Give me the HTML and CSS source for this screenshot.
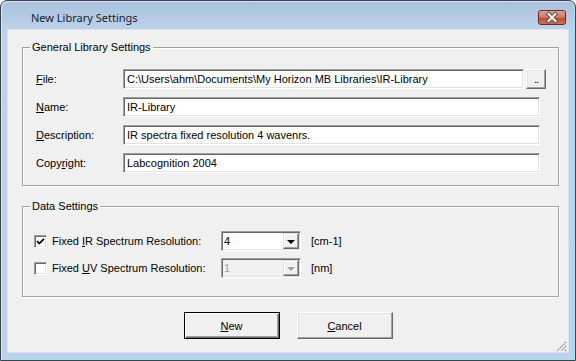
FILE: index.html
```html
<!DOCTYPE html>
<html>
<head>
    <meta charset="utf-8">
    <title>New Library Settings</title>
    <link rel="stylesheet" href="styles.css">
</head>
<body>
    <div class="window">
        <div class="titlebar">
            <span class="title">New Library Settings</span>
            <svg class="close" width="28" height="15" viewBox="0 0 28 15">
                <defs>
                    <linearGradient id="closeGrad" x1="0" y1="0" x2="0" y2="1">
                        <stop offset="0" stop-color="#e2a698"/>
                        <stop offset="0.5" stop-color="#cf7462"/>
                        <stop offset="0.55" stop-color="#bf4a34"/>
                        <stop offset="1" stop-color="#d2705a"/>
                    </linearGradient>
                </defs>
                <rect x="0.5" y="0.5" width="27" height="14" rx="2.5" fill="url(#closeGrad)" stroke="#6e2a20"/>
                <path d="M10.5 4 L17.5 11 M17.5 4 L10.5 11" stroke="#5a4a4a" stroke-width="4" stroke-linecap="square"/>
                <path d="M10.5 4 L17.5 11 M17.5 4 L10.5 11" stroke="#ffffff" stroke-width="2" stroke-linecap="square"/>
            </svg>
        </div>
        <div class="client">
            <fieldset class="group general">
                <legend>General Library Settings</legend>
                <div class="row">
                    <label class="caption"><u>F</u>ile:</label>
                    <input class="field file" type="text" value="C:\Users\ahm\Documents\My Horizon MB Libraries\IR-Library">
                    <button class="browse">..</button>
                </div>
                <div class="row">
                    <label class="caption"><u>N</u>ame:</label>
                    <input class="field" type="text" value="IR-Library">
                </div>
                <div class="row">
                    <label class="caption"><u>D</u>escription:</label>
                    <input class="field" type="text" value="IR spectra fixed resolution 4 wavenrs.">
                </div>
                <div class="row">
                    <label class="caption">Copy<u>r</u>ight:</label>
                    <input class="field" type="text" value="Labcognition 2004">
                </div>
            </fieldset>

            <fieldset class="group data">
                <legend>Data Settings</legend>
                <div class="check-row">
                    <label class="check-label">
                        <span class="checkbox">
                            <svg width="9" height="9" viewBox="0 0 9 9"><path d="M1 4 L3.3 6.5 L8 1.8" fill="none" stroke="#000" stroke-width="1.8"/></svg>
                        </span>
                        <span>Fixed <u>I</u>R Spectrum Resolution:</span>
                    </label>
                    <div class="combo">
                        <span class="combo-value">4</span>
                        <span class="drop"><span class="arrow"></span></span>
                    </div>
                    <span class="unit">[cm-1]</span>
                </div>
                <div class="check-row">
                    <label class="check-label">
                        <span class="checkbox"></span>
                        <span>Fixed <u>U</u>V Spectrum Resolution:</span>
                    </label>
                    <div class="combo disabled">
                        <span class="combo-value">1</span>
                        <span class="drop"><span class="arrow"></span></span>
                    </div>
                    <span class="unit">[nm]</span>
                </div>
            </fieldset>

            <div class="buttons">
                <button class="push default"><u>N</u>ew</button>
                <button class="push"><u>C</u>ancel</button>
            </div>

            <svg class="grip" width="13" height="13" viewBox="0 0 13 13">
                <path d="M12 3 L3 12 M12 7 L7 12 M12 11 L11 12" stroke="#8a8a8a" stroke-width="1.4" stroke-dasharray="1.4 1"/>
                <path d="M13 4 L4 13 M13 8 L8 13" stroke="#ffffff" stroke-width="1" stroke-dasharray="1.4 1"/>
            </svg>
        </div>
    </div>
</body>
</html>
```

FILE: styles.css
```css
body {
    margin: 0;
    width: 576px;
    height: 361px;
    overflow: hidden;
    background-color: #fff;
    font-family: "Liberation Sans", Arial, sans-serif;
    font-size: 11px;
    color: #000;
}
.window {
    box-sizing: border-box;
    width: 576px;
    height: 361px;
    border: 1px solid #3a4350;
    border-radius: 7px 7px 0 0;
    background: linear-gradient(#a9c1dd, #bdd3ec 30px, #bcd2ea);
    box-shadow: inset 1px 1px 0 #d6e4f3, inset -1px -1px 0 #9fe3f2;
    display: flex;
    flex-direction: column;
}
.titlebar {
    height: 29px;
    display: flex;
    align-items: flex-start;
}
.title {
    margin: 9px 0 0 30px;
    font-family: "Noto Sans", "Open Sans", sans-serif;
    font-size: 11px;
    line-height: 16px;
    color: #1b1b2a;
}
.close {
    margin: 9px 9px 0 auto;
}
.client {
    position: relative;
    height: 322px;
    margin: 0 7px;
    background-color: #f0f0f0;
    box-shadow: 0 0 0 1px #d7e3f0;
    display: flex;
    flex-direction: column;
}

/* group boxes */
.group {
    box-sizing: border-box;
    margin: 0 9px 0 14px;
    padding: 0;
    border: 1px solid #a0a0a0;
    box-shadow: inset 1px 1px 0 #fff, 1px 1px 0 #fff;
}
.group legend {
    margin-left: 7px;
    padding: 0 2px;
    line-height: 13px;
    background-color: #f0f0f0;
    color: #000;
}
.general {
    margin-top: 11px;
    height: 145px;
    padding-top: 15px;
}
.data {
    margin-top: 14px;
    height: 97px;
    padding-top: 18px;
}

/* text rows */
.row {
    display: flex;
    align-items: center;
    height: 20px;
    margin: 0 0 8px 13px;
}
.caption {
    width: 87px;
}
.field {
    box-sizing: border-box;
    width: 417px;
    height: 20px;
    margin: 0;
    padding: 0 3px;
    font-family: "Liberation Sans", Arial, sans-serif;
    font-size: 11px;
    color: #000;
    background-color: #fff;
    border: 1px solid;
    border-color: #a0a0a0 #fff #fff #a0a0a0;
    box-shadow: inset 1px 1px 0 #696969, inset -1px -1px 0 #e3e3e3;
    outline: none;
}
.field.file {
    width: 401px;
}
.browse {
    box-sizing: border-box;
    width: 20px;
    height: 20px;
    margin-left: 2px;
    padding: 0 0 3px;
    font-family: "Liberation Sans", Arial, sans-serif;
    font-size: 11px;
    letter-spacing: -1px;
    line-height: 1;
    background-color: #f0f0f0;
    border: 1px solid;
    border-color: #fff #696969 #696969 #fff;
    box-shadow: inset -1px -1px 0 #a0a0a0, inset 1px 1px 0 #e3e3e3;
    display: flex;
    align-items: flex-end;
    justify-content: center;
}

/* check rows */
.check-row {
    display: flex;
    align-items: center;
    height: 20px;
    margin: 0 0 7px 11px;
}
.check-label {
    width: 187px;
    display: flex;
    align-items: center;
    gap: 5px;
}
.checkbox {
    box-sizing: border-box;
    width: 13px;
    height: 13px;
    background-color: #fff;
    border: 1px solid;
    border-color: #a0a0a0 #fff #fff #a0a0a0;
    box-shadow: inset 1px 1px 0 #696969, inset -1px -1px 0 #e3e3e3;
    display: flex;
    align-items: center;
    justify-content: center;
}
.combo {
    box-sizing: border-box;
    width: 80px;
    height: 20px;
    padding: 1px;
    background-color: #fff;
    border: 1px solid;
    border-color: #a0a0a0 #fff #fff #a0a0a0;
    box-shadow: inset 1px 1px 0 #696969, inset -1px -1px 0 #e3e3e3;
    display: flex;
    align-items: center;
}
.combo-value {
    flex: 1;
    padding-left: 1px;
}
.drop {
    box-sizing: border-box;
    width: 16px;
    height: 16px;
    background-color: #f0f0f0;
    border: 1px solid;
    border-color: #e3e3e3 #696969 #696969 #e3e3e3;
    box-shadow: inset -1px -1px 0 #a0a0a0, inset 1px 1px 0 #fff;
    display: flex;
    align-items: center;
    justify-content: center;
}
.arrow {
    width: 0;
    height: 0;
    margin-top: 1px;
    border-left: 4px solid transparent;
    border-right: 4px solid transparent;
    border-top: 4px solid #000;
}
.combo.disabled {
    background-color: #f0f0f0;
    color: #a0a0a0;
}
.combo.disabled .arrow {
    border-top-color: #a0a0a0;
}
.unit {
    margin-left: 10px;
}

/* bottom buttons */
.buttons {
    display: flex;
    justify-content: center;
    gap: 17px;
    margin-top: 15px;
}
.push {
    box-sizing: border-box;
    width: 96px;
    height: 27px;
    padding: 0;
    font-family: "Liberation Sans", Arial, sans-serif;
    font-size: 11px;
    color: #000;
    background-color: #f0f0f0;
    border: 1px solid;
    border-color: #fff #696969 #696969 #fff;
    box-shadow: inset -1px -1px 0 #a0a0a0, inset 1px 1px 0 #e3e3e3;
}
.push.default {
    border-color: #000;
    box-shadow: inset 1px 1px 0 #fff, inset -1px -1px 0 #696969, inset -2px -2px 0 #a0a0a0;
}
.grip {
    position: absolute;
    right: 1px;
    bottom: 0;
}
```
